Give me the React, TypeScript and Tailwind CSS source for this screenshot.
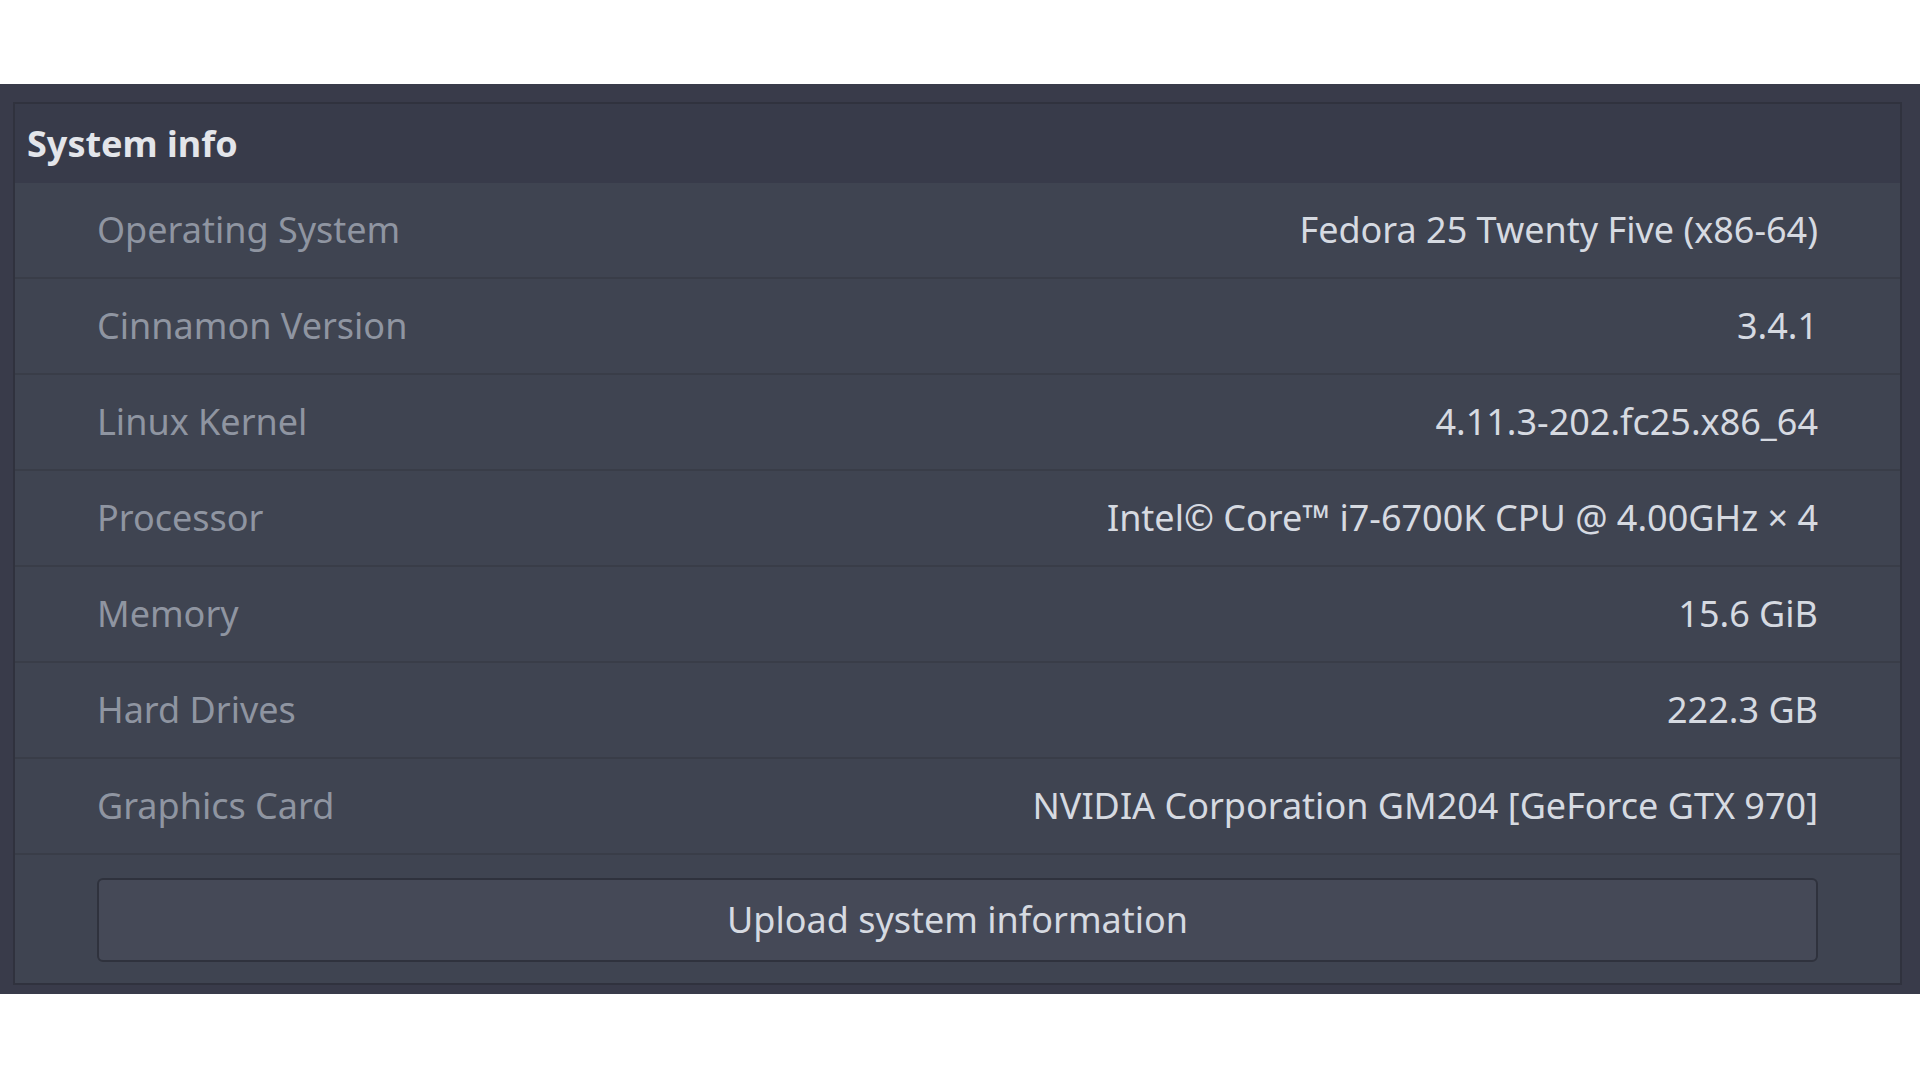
import React from 'react';

const rows: [string, string][] = [
  ['Operating System', 'Fedora 25 Twenty Five (x86-64)'],
  ['Cinnamon Version', '3.4.1'],
  ['Linux Kernel', '4.11.3-202.fc25.x86_64'],
  ['Processor', 'Intel© Core™ i7-6700K CPU @ 4.00GHz × 4'],
  ['Memory', '15.6 GiB'],
  ['Hard Drives', '222.3 GB'],
  ['Graphics Card', 'NVIDIA Corporation GM204 [GeForce GTX 970]'],
];

export default function App() {
  return (
    <div className="min-h-screen w-full bg-white pt-[84px] font-['Noto_Sans',sans-serif]">
      <div className="h-[910px] bg-[#393b4a] pl-[13px] pr-[18px] pt-[18px]">
        <div className="border-2 border-[#30323e] bg-[#3f4451]">
          <div className="flex h-[79px] items-center bg-[#383b4a] px-[12px]">
            <h2 className="text-[36px] font-bold text-[#e3e5ea]">System info</h2>
          </div>

          {rows.map(([label, value]) => (
            <div
              key={label}
              className="flex h-[96px] items-center justify-between border-b-2 border-[#393d48] pl-[82px] pr-[82px]"
            >
              <span className="text-[36px] text-[#8f95a1]">{label}</span>
              <span className="text-[36px] text-[#d6dae1]">{value}</span>
            </div>
          ))}

          <div className="px-[82px] pt-[23px] pb-[21px]">
            <button className="flex h-[84px] w-full items-center justify-center rounded-[6px] border-2 border-[#2f323d] bg-[#454957] text-[36px] text-[#d6dae1]">
              Upload system information
            </button>
          </div>
        </div>
      </div>
    </div>
  );
}
